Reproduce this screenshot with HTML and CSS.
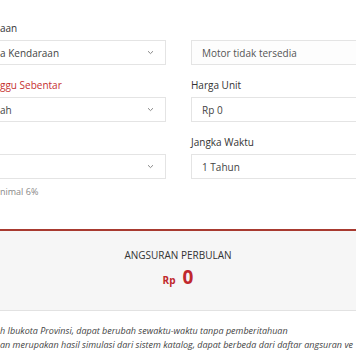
FILE: index.html
```html
<!DOCTYPE html>
<html lang="id">
<head>
    <meta charset="UTF-8">
    <meta name="viewport" content="width=device-width, initial-scale=1.0">
    <title>Simulasi Kredit</title>
    <link rel="stylesheet" href="styles.css">
</head>
<body>
    <div class="form-grid">
        <div class="field left">
            <label>aan</label>
            <div class="select">
                <span>a Kendaraan</span>
                <svg class="chevron" width="7" height="5" viewBox="0 0 7 5"><path d="M1 1.2 L3.5 3.6 L6 1.2" fill="none" stroke="#888" stroke-width="1"/></svg>
            </div>
        </div>
        <div class="field right">
            <label>&nbsp;</label>
            <div class="select disabled">
                <span>Motor tidak tersedia</span>
            </div>
        </div>

        <div class="field left">
            <label class="required">ggu Sebentar</label>
            <div class="select">
                <span>ah</span>
                <svg class="chevron" width="7" height="5" viewBox="0 0 7 5"><path d="M1 1.2 L3.5 3.6 L6 1.2" fill="none" stroke="#888" stroke-width="1"/></svg>
            </div>
        </div>
        <div class="field right">
            <label>Harga Unit</label>
            <div class="select">
                <span>Rp 0</span>
            </div>
        </div>

        <div class="field left">
            <label>&nbsp;</label>
            <div class="select">
                <span></span>
                <svg class="chevron" width="7" height="5" viewBox="0 0 7 5"><path d="M1 1.2 L3.5 3.6 L6 1.2" fill="none" stroke="#888" stroke-width="1"/></svg>
            </div>
            <p class="hint">nimal 6%</p>
        </div>
        <div class="field right">
            <label>Jangka Waktu</label>
            <div class="select">
                <span>1 Tahun</span>
            </div>
        </div>
    </div>

    <div class="result">
        <div class="result-title">ANGSURAN PERBULAN</div>
        <div class="result-value"><span class="currency">Rp</span><span class="amount">0</span></div>
    </div>

    <div class="notes">
        <p>h Ibukota Provinsi, dapat berubah sewaktu-waktu tanpa pemberitahuan</p>
        <p>an merupakan hasil simulasi dari sistem katalog, dapat berbeda dari daftar angsuran ve</p>
    </div>
</body>
</html>
```

FILE: styles.css
```css
body {
    margin: 0;
    font-family: 'Open Sans', 'Liberation Sans', sans-serif;
    background: #fff;
    color: #333;
    overflow: hidden;
    width: 356px;
    height: 364px;
}
.form-grid {
    display: grid;
    grid-template-columns: 166px 1fr;
    column-gap: 25px;
    padding-top: 21px;
}
.field {
    margin-bottom: 13px;
}
.field label {
    display: block;
    font-size: 10px;
    line-height: 14px;
    height: 14px;
    margin-bottom: 5px;
    color: #333;
}
.field label.required {
    color: #c62f2f;
}
.select {
    height: 25px;
    box-sizing: border-box;
    border: 1px solid #e4e4e4;
    background: #fff;
    display: flex;
    align-items: center;
    justify-content: space-between;
    padding: 0 10px;
    font-size: 10px;
    color: #444;
}
.left .select {
    border-left: none;
    padding-left: 0;
}
.right .select {
    border-right: none;
}
.select.disabled {
    background: #fdfdfd;
    color: #555;
}
.chevron {
    margin-right: 1px;
}
.hint {
    margin: 7px 0 0;
    font-size: 9px;
    line-height: 12px;
    color: #888;
}
.result {
    border-top: 2px solid #a83a30;
    border-bottom: 1px solid #e2e2e2;
    background: #f6f6f6;
    margin-top: 18px;
    padding: 18px 0 19px;
    text-align: center;
}
.result-title {
    font-size: 10px;
    line-height: 12px;
    color: #333;
}
.result-value {
    margin-top: 5px;
    line-height: 22px;
    color: #c0282d;
    font-weight: 700;
}
.currency {
    font-size: 10px;
    margin-right: 7px;
}
.amount {
    font-size: 19px;
}
.notes {
    padding-top: 13px;
    overflow: hidden;
}
.notes p {
    margin: 0;
    font-size: 9px;
    line-height: 14px;
    font-style: italic;
    color: #444;
    white-space: nowrap;
}
```
